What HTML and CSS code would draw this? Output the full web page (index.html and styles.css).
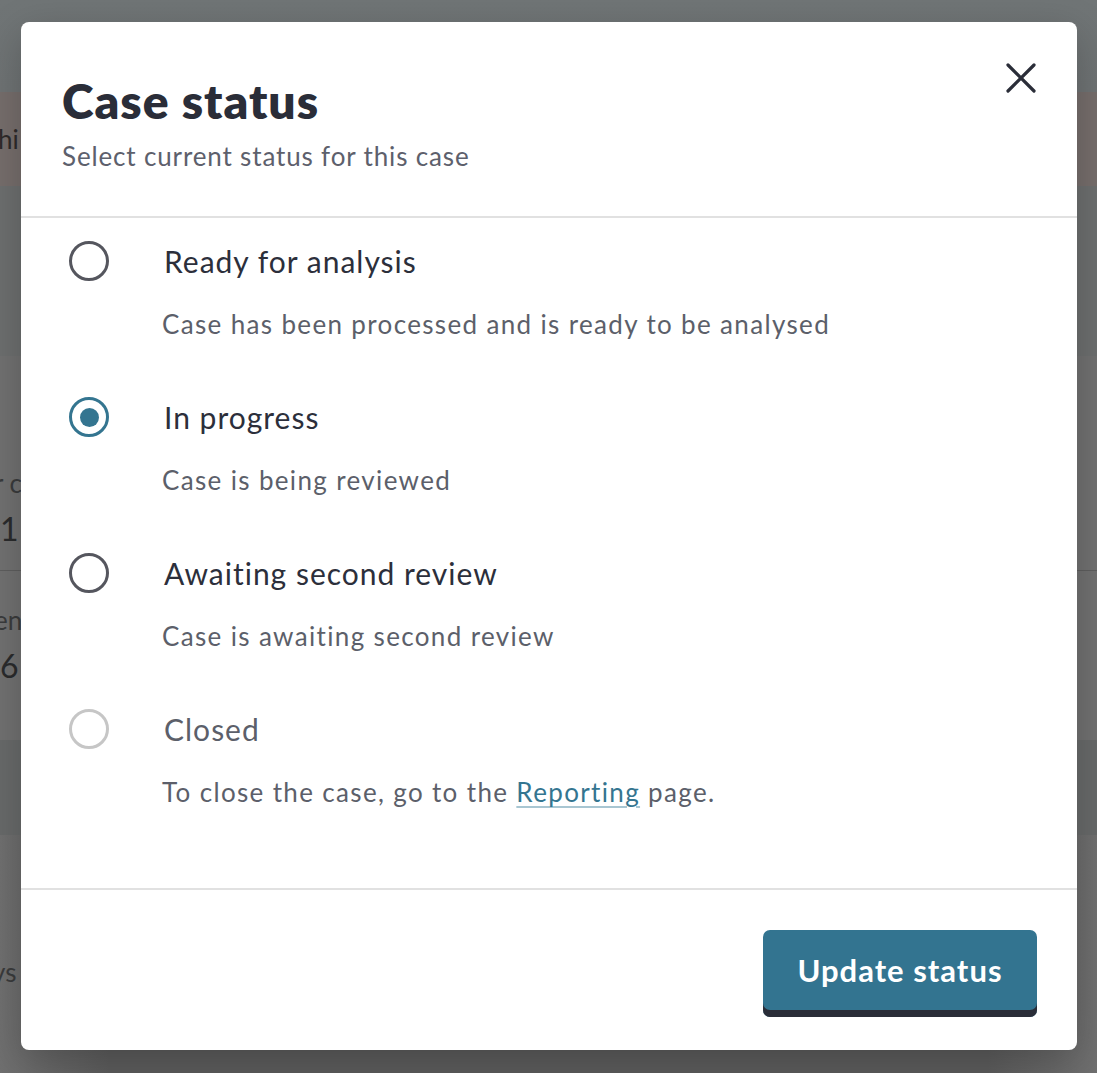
FILE: index.html
```html
<!DOCTYPE html>
<html lang="en">
<head>
<meta charset="utf-8">
<title>Case status</title>
<link rel="stylesheet" href="styles.css">
</head>
<body>
<div class="page">
  <div class="band band-top"></div>
  <div class="band band-warn"><span class="peek peek-warn">hi</span></div>
  <div class="band band-a"></div>
  <div class="band band-card">
    <span class="peek peek-small">r c</span>
    <span class="peek peek-big">1</span>
  </div>
  <div class="band band-card2">
    <span class="peek peek-small">en</span>
    <span class="peek peek-big">6</span>
  </div>
  <div class="band band-dark"></div>
  <div class="band band-bottom"><span class="peek peek-small peek-ys">ys</span></div>
</div>

<div class="modal" role="dialog" aria-labelledby="modal-title">
  <header class="modal-header">
    <h1 id="modal-title" class="modal-title">Case status</h1>
    <p class="modal-subtitle">Select current status for this case</p>
    <button class="close-btn" aria-label="Close">
      <svg width="30" height="30" viewBox="0 0 30 30"><path d="M2 2 L28 28 M28 2 L2 28" stroke="#2a2d38" stroke-width="3.2" stroke-linecap="round" fill="none"/></svg>
    </button>
  </header>
  <div class="modal-body">
    <div class="option">
      <span class="radio"></span>
      <span class="option-label">Ready for analysis</span>
      <span class="option-desc">Case has been processed and is ready to be analysed</span>
    </div>
    <div class="option">
      <span class="radio radio-checked"></span>
      <span class="option-label">In progress</span>
      <span class="option-desc">Case is being reviewed</span>
    </div>
    <div class="option">
      <span class="radio"></span>
      <span class="option-label">Awaiting second review</span>
      <span class="option-desc">Case is awaiting second review</span>
    </div>
    <div class="option option-disabled">
      <span class="radio radio-disabled"></span>
      <span class="option-label">Closed</span>
      <span class="option-desc">To close the case, go to the <a class="link" href="#">Reporting</a> page.</span>
    </div>
  </div>
  <footer class="modal-footer">
    <button class="primary-btn">Update status</button>
  </footer>
</div>
</body>
</html>
```

FILE: styles.css
```css
* { box-sizing: border-box; }

html, body {
  margin: 0;
  padding: 0;
  height: 100%;
  overflow: hidden;
}

body {
  font-family: Lato, "Noto Sans", sans-serif;
  background: #6e6f6f;
}

.page {
  display: flex;
  flex-direction: column;
  height: 1073px;
}

.band {
  display: flex;
  flex-direction: column;
  color: #2f3033;
}
.band-top { height: 92px; background: linear-gradient(#707576, #6f7374); }
.band-warn { height: 94px; background: #766e6c; justify-content: center; }
.band-a { height: 170px; background: #6d6f6f; }
.band-card { height: 215px; background: #717171; border-bottom: 1px solid #5e5e5e; padding-top: 112px; gap: 16px; }
.band-card2 { height: 169px; background: #717171; padding-top: 34px; gap: 16px; }
.band-dark { height: 95px; background: #686a6a; }
.band-bottom { flex: 1; background: linear-gradient(90deg, #707070, #5c5c5c 10%, #5c5c5c 90%, #707070); padding-top: 122px; }

.peek { font-size: 26px; line-height: 30px; margin-left: -6px; }
.peek-warn { color: #2e2a2a; margin-left: -2px; }
.peek-small { color: #3a3b3c; }
.peek-big { font-size: 32px; color: #2a2b2c; margin-left: 0; }
.peek-ys { margin-left: -8px; }

.modal {
  position: absolute;
  left: 21px;
  top: 22px;
  width: 1056px;
  height: 1028px;
  background: #ffffff;
  border-radius: 8px;
  box-shadow: 0 12px 40px rgba(0, 0, 0, 0.22);
  display: flex;
  flex-direction: column;
}

.modal-header {
  position: relative;
  height: 196px;
  padding: 50px 41px 0;
  border-bottom: 2px solid #e1e1e1;
}

.modal-title {
  margin: 0;
  font-size: 48px;
  line-height: 58px;
  font-weight: 800;
  color: #2a2d38;
  letter-spacing: 1px;
}

.modal-subtitle {
  margin: 9px 0 0;
  font-size: 26px;
  line-height: 34px;
  color: #5d606c;
  letter-spacing: 0.85px;
}

.close-btn {
  position: absolute;
  top: 41px;
  right: 41px;
  width: 30px;
  height: 30px;
  padding: 0;
  border: 0;
  background: none;
  display: flex;
}

.modal-body {
  flex: 1;
  padding: 23px 48px 0;
  display: flex;
  flex-direction: column;
}

.option {
  display: grid;
  grid-template-columns: 95px 1fr;
  grid-template-rows: 40px 36px;
  row-gap: 25px;
  margin-bottom: 55px;
  align-items: center;
}

.radio {
  grid-row: 1;
  grid-column: 1;
  width: 40px;
  height: 40px;
  border: 3.5px solid #55565e;
  border-radius: 50%;
  display: flex;
  align-items: center;
  justify-content: center;
}
.radio-checked { border-color: #347590; }
.radio-checked::after {
  content: "";
  width: 19px;
  height: 19px;
  border-radius: 50%;
  background: #347590;
}
.radio-disabled { border-color: #c6c6c6; }

.option-label {
  grid-row: 1;
  grid-column: 2;
  font-size: 30px;
  line-height: 40px;
  color: #2c2f3b;
  letter-spacing: 1px;
}

.option-desc {
  grid-row: 2;
  grid-column: 2;
  margin-left: -2px;
  font-size: 26px;
  line-height: 36px;
  color: #5c5f6a;
  letter-spacing: 1.35px;
}

.option-disabled .option-label { color: #5c5f6a; }

.link {
  color: #347590;
  text-decoration: underline;
  text-decoration-color: #a8c6d2;
  text-underline-offset: 4px;
  text-decoration-thickness: 2px;
}

.modal-footer {
  height: 162px;
  border-top: 2px solid #e1e1e1;
  padding: 40px 40px 0;
  display: flex;
  justify-content: flex-end;
  align-items: flex-start;
}

.primary-btn {
  width: 274px;
  height: 87px;
  padding: 0 0 7px;
  border: 0;
  border-radius: 7px;
  background: #337490;
  box-shadow: inset 0 -7px 0 #2a2d38;
  color: #ffffff;
  font-family: Lato, "Noto Sans", sans-serif;
  font-size: 31px;
  font-weight: 700;
  letter-spacing: 1px;
}
```
